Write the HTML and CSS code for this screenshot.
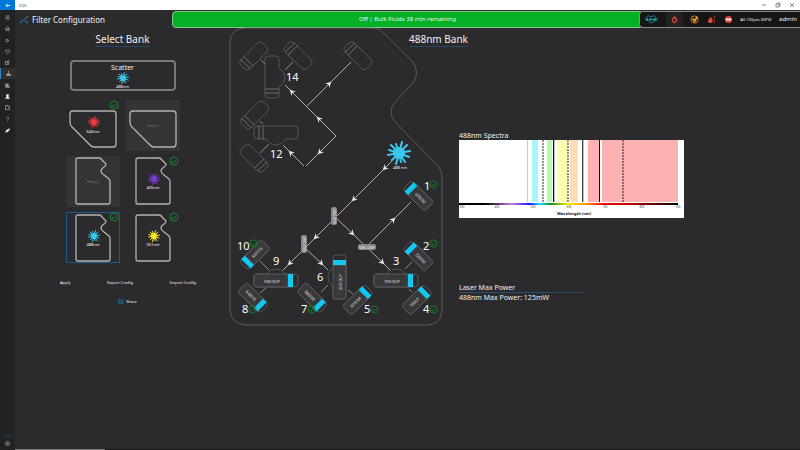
FILE: index.html
```html
<!DOCTYPE html>
<html lang="en">
  <head>
    <meta charset="UTF-8" />
    <meta name="viewport" content="width=device-width, initial-scale=1.0" />
    <title>SQS</title>
    <link rel="stylesheet" href="styles.css">
  </head>
  <body>
    <!-- shared shapes -->
    <svg class="defs" aria-hidden="true">
      <symbol id="burst" viewBox="-12 -12 24 24">
        <circle r="6" fill="currentColor" />
        <path d="M0 0L3-11M0 0L8-8M0 0L11-2M0 0L10 4M0 0L6 9M0 0L2 9M0 0L-3 11M0 0L-7 7M0 0L-11 2M0 0L-10-3M0 0L-8-8M0 0L-3-9" stroke="currentColor" stroke-width="2" stroke-linecap="round" />
      </symbol>
      <symbol id="check" viewBox="-5 -5 10 10">
        <circle r="4" fill="none" stroke="#12862a" />
        <path d="M-2 0L-1 2L2-1" fill="none" stroke="#12862a" />
      </symbol>
      <symbol id="chip" viewBox="-16 -7 32 14" overflow="visible">
        <rect class="shell" x="-15" y="-6" width="31" height="13" rx="4" />
        <path class="thin" d="M-11-6V7M-7-6V7" />
      </symbol>
      <symbol id="chip-on" viewBox="-16 -7 32 14" overflow="visible">
        <rect class="shell" x="-15" y="-6" width="31" height="13" rx="4" />
        <rect class="glass" x="-7" y="-6" width="23" height="13" rx="2" />
        <rect class="band" x="-12" y="-6" width="5" height="13" />
      </symbol>
      <symbol id="chip-on-end" viewBox="-16 -7 32 14" overflow="visible">
        <rect class="shell" x="-16" y="-6" width="31" height="13" rx="4" />
        <rect class="glass" x="-16" y="-6" width="23" height="13" rx="2" />
        <rect class="band" x="7" y="-6" width="5" height="13" />
      </symbol>
    </svg>

    <div class="titlebar">
      <button class="back" aria-label="Back">
        <svg viewBox="0 0 6 6"><path d="M6 3H1M3 1L1 3L3 5" /></svg>
      </button>
      <span class="app_name">SQS</span>
      <div class="win_buttons">
        <button aria-label="Minimize"><svg viewBox="0 0 6 6"><path d="M1 3H5" /></svg></button>
        <button aria-label="Restore"><svg viewBox="0 0 6 6"><path d="M1 2H4V5H1ZM2 2V1H5V4H4" /></svg></button>
        <button aria-label="Close"><svg viewBox="0 0 6 6"><path d="M1 1L5 5M5 1L1 5" /></svg></button>
      </div>
    </div>

    <div class="shell_row">
      <nav class="sidebar">
        <div class="nav_items">
          <button aria-label="Menu"><svg viewBox="0 0 10 10"><path d="M1 2H9M1 5H9M1 8H9" /></svg></button>
          <button aria-label="Home"><svg viewBox="0 0 10 10"><path d="M1 5L5 1L9 5M2 4V9H4V6H6V9H8V4" /></svg></button>
          <button aria-label="Run"><svg viewBox="0 0 10 10"><path d="M3 2L8 5L3 8Z" /></svg></button>
          <button aria-label="Health"><svg viewBox="0 0 10 10"><path d="M5 9L1 5C0 3 3 0 5 3C7 0 10 3 9 5Z" /></svg></button>
          <button aria-label="Edit"><svg viewBox="0 0 10 10"><path d="M5 3H1V9H7V6M4 6L5 3L8 1L9 3L6 6Z" /></svg></button>
          <button class="active" aria-label="Filters"><svg viewBox="0 0 10 10"><path d="M4 1H6M5 1V4L2 7H8L5 4M1 9H9V7H1Z" /></svg></button>
          <button aria-label="Library"><svg viewBox="0 0 10 10"><path d="M1 1V9M3 1V9H5V2H3M6 2L9 9M6 2V9H9" /></svg></button>
          <button aria-label="User"><svg viewBox="0 0 10 10"><path class="solid" d="M3 1H7V5L6 6L9 8V9H1V8L4 6L3 5Z" /></svg></button>
          <button aria-label="Files"><svg viewBox="0 0 10 10"><path d="M1 1H6L9 4V9H1ZM6 1V4H9" /></svg></button>
          <button aria-label="Help"><svg viewBox="0 0 10 10"><path d="M3 3C3 0 8 0 7 3C7 5 5 4 5 7M5 8V9" /></svg></button>
          <button aria-label="Clean"><svg viewBox="0 0 10 10"><path class="solid" d="M1 9L3 4L6 3L9 1L8 5L6 7Z" /></svg></button>
        </div>
        <a class="info" href="#info">Info</a>
        <button aria-label="Settings"><svg viewBox="0 0 10 10"><circle cx="5" cy="5" r="4" /><circle cx="5" cy="5" r="1" /></svg></button>
      </nav>

      <div class="page">
        <header class="header">
          <div class="heading">
            <svg viewBox="0 0 12 10">
              <path d="M2 8L8 3M5 5L9 9" stroke="#1c6ea4" />
              <path d="M7 4L10 1" stroke="#8a8a8a" />
              <circle cx="2" cy="8" r="1" fill="#1c7ab8" />
              <circle cx="9" cy="8" r="1" fill="#1c7ab8" />
            </svg>
            <h1>Filter Configuration</h1>
          </div>
          <div class="banner">Off | Bulk Fluids 38 min remaining</div>
          <div class="status">
            <button class="health" aria-label="Cytometer health"><svg viewBox="0 0 13 10"><path d="M6 9L2 6C-1 1 4 0 6 2C9 0 13 1 11 6Z" stroke="#1585b0" /><path d="M0 5H13" stroke="#2fb4a0" stroke-width="2" stroke-dasharray="3 1" /></svg></button>
            <button class="drop" aria-label="Fluid"><svg viewBox="0 0 10 10"><path d="M5 1C8 4 8 5 8 7C7 10 3 10 2 7C2 5 3 4 5 1Z" stroke="#d8403a" stroke-width="2" /></svg></button>
            <button aria-label="Calibration"><svg viewBox="0 0 10 10"><circle cx="5" cy="5" r="4" stroke="#e08a1c" /><path d="M3 4L5 7L8 2" stroke="#f0a030" stroke-width="2" /></svg></button>
            <button aria-label="Level"><svg viewBox="0 0 10 10"><path d="M4 2C6 5 7 6 6 8C5 9 2 9 1 8C1 6 2 5 4 2Z" fill="#e84840" /><path d="M8 1V9" stroke="#e84840" stroke-dasharray="2 1" /></svg></button>
            <button aria-label="Stop"><svg viewBox="0 0 10 10"><circle cx="5" cy="5" r="4" fill="#ec4038" /><path d="M2 5H8" stroke="#fff" stroke-width="2" /></svg></button>
            <span class="mode">A0-100µm-30PSI</span>
            <span class="user">admin</span>
          </div>
        </header>

        <main class="content">
          <section class="banks">
            <h2>Select Bank</h2>
            <button class="scatter">
              <span>Scatter</span>
              <svg class="c488"><use href="#burst" /></svg>
              <small>488nm</small>
            </button>
            <div class="tiles">
              <button class="tile">
                <svg viewBox="0 0 54 51">
                  <path class="card" d="M7 11H47Q50 11 50 14V44Q50 47 47 47H28Q26 47 24 45L6 27Q4 25 4 22V14Q4 11 7 11Z" />
                  <use class="c640" href="#burst" x="22" y="16" width="12" height="12" />
                  <text x="27" y="33">640nm</text>
                  <use href="#check" x="43" y="0" width="10" height="10" />
                </svg>
              </button>
              <button class="tile empty">
                <svg viewBox="0 0 54 51">
                  <path class="card" d="M7 11H47Q50 11 50 14V44Q50 47 47 47H28Q26 47 24 45L6 27Q4 25 4 22V14Q4 11 7 11Z" />
                  <text x="27" y="27">Empty</text>
                </svg>
              </button>
              <button class="tile empty">
                <svg viewBox="0 0 54 51">
                  <path class="card" d="M12 2H33Q35 2 36 4L40 8Q40 10 38 11Q35 13 35 15Q35 17 38 19L43 23Q44 24 44 26V46Q44 48 42 48H12Q10 48 10 46V4Q10 2 12 2Z" />
                  <text x="27" y="27">Empty</text>
                </svg>
              </button>
              <button class="tile">
                <svg viewBox="0 0 54 51">
                  <path class="card" d="M12 2H33Q35 2 36 4L40 8Q40 10 38 11Q35 13 35 15Q35 17 38 19L43 23Q44 24 44 26V46Q44 48 42 48H12Q10 48 10 46V4Q10 2 12 2Z" />
                  <use class="c405" href="#burst" x="22" y="17" width="12" height="12" />
                  <text x="27" y="33">405nm</text>
                  <use href="#check" x="43" y="0" width="10" height="10" />
                </svg>
              </button>
              <button class="tile selected">
                <svg viewBox="0 0 54 51">
                  <path class="card" d="M12 3H33Q35 3 36 5L40 9Q40 11 38 12Q35 14 35 16Q35 18 38 20L43 24Q44 25 44 27V47Q44 49 42 49H12Q10 49 10 47V5Q10 3 12 3Z" />
                  <use class="c488" href="#burst" x="22" y="18" width="12" height="12" />
                  <text x="27" y="34">488nm</text>
                  <use href="#check" x="43" y="0" width="10" height="10" />
                </svg>
              </button>
              <button class="tile">
                <svg viewBox="0 0 54 51">
                  <path class="card" d="M12 3H33Q35 3 36 5L40 9Q40 11 38 12Q35 14 35 16Q35 18 38 20L43 24Q44 25 44 27V47Q44 49 42 49H12Q10 49 10 47V5Q10 3 12 3Z" />
                  <use class="c561" href="#burst" x="22" y="18" width="12" height="12" />
                  <text x="27" y="34">561nm</text>
                  <use href="#check" x="43" y="0" width="10" height="10" />
                </svg>
              </button>
            </div>
            <div class="actions">
              <button>Apply</button>
              <button>Export Config</button>
              <button>Import Config</button>
            </div>
            <button class="share">
              <svg viewBox="0 0 6 6"><path d="M1 1V5H5V3M2 3L5 1" /></svg>
              Share
            </button>
          </section>

          <section class="bank_map">
            <h2>488nm Bank</h2>
            <svg class="map" viewBox="230 28 212 298">
              <defs>
                <marker id="arrow" viewBox="-4 -3 6 6" markerWidth="6" markerHeight="6" markerUnits="userSpaceOnUse" orient="auto">
                  <path d="M2 0L-4-3L-2 0L-4 3Z" fill="#e6e6e6" />
                </marker>
              </defs>
              <path class="outline" d="M244 28H374Q380 28 385 34L413 62Q420 73 413 83L395 102Q387 112 395 122L437 165Q442 170 442 178V310Q441 324 428 325H246Q231 324 230 310V42Q231 29 244 28Z" />

              <!-- light path, a marker sits on every middle point -->
              <g class="beam">
                <path d="M392 161L384 169L353 200L315 238L289 264L283 270" />
                <path d="M334 216L353 234L383 263L390 270" />
                <path d="M366 247L394 219L411 202" />
                <path d="M305 248L322 264L328 270" />
                <path d="M336 136L318 118L291 91L285 85" />
                <path d="M336 136L319 153L306 166" />
                <path d="M304 166L290 152L283 145" />
                <path d="M307 106L330 83L351 62" />
              </g>
              <g class="stub">
                <path d="M261 60L265 64M293 62L285 70M260 121L263 124M269 144L260 153" />
                <path d="M260 261L269 270M260 293L266 288M328 285L321 292M412 262L405 269M409 289L412 292M348 290L353 294" />
              </g>

              <!-- empty slots -->
              <g transform="translate(253 56) rotate(-45)"><use href="#chip" x="-16" y="-7" width="32" height="14" /></g>
              <g transform="translate(298 55) rotate(45)"><use href="#chip" x="-16" y="-7" width="32" height="14" /></g>
              <g transform="translate(358 55) rotate(45)"><use href="#chip" x="-16" y="-7" width="32" height="14" /></g>
              <g transform="translate(254 115) rotate(-45)"><use href="#chip" x="-16" y="-7" width="32" height="14" /></g>
              <g transform="translate(254 159) rotate(225)"><use href="#chip" x="-16" y="-7" width="32" height="14" /></g>
              <path class="shell" d="M268 56H276Q279 56 279 59V68Q285 72 285 78Q285 83 279 87V95Q279 98 276 98H268Q265 98 265 95V59Q265 56 268 56Z" />
              <path class="thin" d="M265 89H279M265 93H279" />
              <path class="shell" d="M257 126H295Q298 126 298 129V136Q298 139 295 139H286Q282 145 276 145Q270 145 267 139H257Q254 139 254 136V129Q254 126 257 126Z" />
              <path class="thin" d="M259 126V139M263 126V139" />

              <!-- filters -->
              <g transform="translate(254 255) rotate(-45)"><use href="#chip-on" x="-16" y="-7" width="32" height="14" /><text class="label" x="4" y="2">507/19</text></g>
              <g transform="translate(254 298) rotate(45)"><use href="#chip-on-end" x="-16" y="-7" width="32" height="14" /><text class="label" x="-4" y="2">549/15</text></g>
              <g transform="translate(313 298) rotate(45)"><use href="#chip-on-end" x="-16" y="-7" width="32" height="14" /><text class="label" x="-4" y="2">583/30</text></g>
              <g transform="translate(358 299) rotate(-45)"><use href="#chip-on-end" x="-16" y="-7" width="32" height="14" /><text class="label" x="-4" y="2">615/24</text></g>
              <g transform="translate(417 299) rotate(-45)"><use href="#chip-on-end" x="-16" y="-7" width="32" height="14" /><text class="label" x="-4" y="2">750LP</text></g>
              <g transform="translate(418 255) rotate(45)"><use href="#chip-on" x="-16" y="-7" width="32" height="14" /><text class="label" x="4" y="2">720/60</text></g>
              <g transform="translate(418 195) rotate(45)"><use href="#chip-on" x="-16" y="-7" width="32" height="14" /><text class="label" x="4" y="2">670/30</text></g>

              <!-- dichroics -->
              <g transform="translate(276 281)">
                <path class="shell" d="M-19-7H-10Q-6-12 0-12Q6-12 10-7H19Q22-7 22-4V3Q22 6 19 6H-19Q-22 6-22 3V-4Q-22-7-19-7Z" />
                <rect class="glass" x="-22" y="-7" width="34" height="13" rx="2" />
                <rect class="band" x="12" y="-7" width="5" height="13" />
                <text class="label" x="-4" y="2">530 DLP</text>
              </g>
              <g transform="translate(396 281)">
                <path class="shell" d="M-19-7H-10Q-6-12 0-12Q6-12 10-7H19Q22-7 22-4V3Q22 6 19 6H-19Q-22 6-22 3V-4Q-22-7-19-7Z" />
                <rect class="glass" x="-22" y="-7" width="34" height="13" rx="2" />
                <rect class="band" x="12" y="-7" width="5" height="13" />
                <text class="label" x="-4" y="2">750 DLP</text>
              </g>
              <g transform="translate(340 277) rotate(-90)">
                <path class="shell" d="M-19-7H-10Q-6-12 0-12Q6-12 10-7H19Q22-7 22-4V3Q22 6 19 6H-19Q-22 6-22 3V-4Q-22-7-19-7Z" />
                <rect class="glass" x="-22" y="-7" width="34" height="13" rx="2" />
                <rect class="band" x="12" y="-7" width="5" height="13" />
                <text class="label" x="-5" y="2">600 DLP</text>
              </g>
              <g class="pill" transform="translate(334 216) rotate(-90)"><rect x="-9" y="-3" width="18" height="6" rx="2" /><text y="2">640 DSP</text></g>
              <g class="pill" transform="translate(304 244) rotate(-90)"><rect x="-9" y="-3" width="18" height="6" rx="2" /><text y="2">560 DSP</text></g>
              <g class="pill" transform="translate(367 247)"><rect x="-9" y="-3" width="18" height="6" rx="2" /><text y="2">685 DSP</text></g>

              <use class="c488" href="#burst" x="387" y="141" width="24" height="24" />
              <text class="label" x="400" y="169">488 nm</text>

              <g class="num">
                <text x="286" y="81">14</text>
                <text x="270" y="158">12</text>
                <text x="237" y="250">10</text>
                <text x="273" y="265">9</text>
                <text x="317" y="281">6</text>
                <text x="242" y="313">8</text>
                <text x="301" y="313">7</text>
                <text x="364" y="313">5</text>
                <text x="423" y="313">4</text>
                <text x="393" y="265">3</text>
                <text x="423" y="250">2</text>
                <text x="424" y="190">1</text>
              </g>
              <g>
                <use href="#check" x="249" y="239" width="9" height="9" />
                <use href="#check" x="248" y="305" width="9" height="9" />
                <use href="#check" x="307" y="305" width="9" height="9" />
                <use href="#check" x="370" y="305" width="9" height="9" />
                <use href="#check" x="429" y="305" width="9" height="9" />
                <use href="#check" x="429" y="239" width="9" height="9" />
                <use href="#check" x="429" y="180" width="9" height="9" />
              </g>
            </svg>
          </section>

          <section class="details">
            <h3>488nm Spectra</h3>
            <svg class="chart" viewBox="0 0 225 78">
              <defs>
                <linearGradient id="visible">
                  <stop offset="0" stop-color="#000" />
                  <stop offset="0.12" stop-color="#000" />
                  <stop offset="0.24" stop-color="#c77de0" />
                  <stop offset="0.32" stop-color="#1a1aff" />
                  <stop offset="0.37" stop-color="#18e0f0" />
                  <stop offset="0.42" stop-color="#109020" />
                  <stop offset="0.5" stop-color="#fff000" />
                  <stop offset="0.58" stop-color="#ff9010" />
                  <stop offset="0.66" stop-color="#f00808" />
                  <stop offset="0.78" stop-color="#c00000" />
                  <stop offset="1" stop-color="#000" />
                </linearGradient>
              </defs>
              <rect width="225" height="78" fill="#fff" />
              <rect x="68" width="1" height="62" fill="#7fe6f2" />
              <rect x="73" width="6" height="62" fill="#aef2fc" />
              <rect x="88" width="5" height="62" fill="#b2fbb2" />
              <rect x="98" width="11" height="62" fill="#fdfdb0" />
              <rect x="111" width="8" height="62" fill="#fddcb8" />
              <rect x="129" width="11" height="62" fill="#fdb2b2" />
              <rect x="143" width="76" height="62" fill="#fdb2b2" />
              <rect x="94" width="1" height="62" fill="#111" />
              <rect x="95" width="1" height="62" fill="#b8c0b8" />
              <rect x="123" width="1" height="62" fill="#3c4644" />
              <rect x="124" width="1" height="62" fill="#b8c0b8" />
              <rect x="140" width="1" height="62" fill="#111" />
              <path class="dash" d="M84 0V62M109 0V62M164 0V62" />
              <rect y="63" width="219" height="2" fill="url(#visible)" />
              <g class="ticks">
                <text x="3" y="68">300</text>
                <text x="38" y="68">400</text>
                <text x="74" y="68">500</text>
                <text x="110" y="68">600</text>
                <text x="146" y="68">700</text>
                <text x="183" y="68">800</text>
                <text x="219" y="68">900</text>
              </g>
              <text class="axis" x="115" y="75">Wavelength (nm)</text>
            </svg>
            <h3 class="power_title">Laser Max Power</h3>
            <p class="power">488nm Max Power: 125mW</p>
          </section>
        </main>
        <div class="progress"><div class="progress_bar"></div></div>
      </div>
    </div>
  </body>
</html>
```
FILE: styles.css
```css
* {
  box-sizing: border-box;
}
body {
  margin: 0;
  min-height: 100vh;
  display: flex;
  flex-direction: column;
  background: #2b2b2d;
  color: #f0f0f0;
  font-family: "Noto Sans", "Open Sans", sans-serif;
  font-size: 4px;
}
button {
  border: none;
  background: none;
  color: inherit;
  font: inherit;
  padding: 0;
}
svg {
  display: block;
}
h1,
h2,
h3,
p {
  margin: 0;
  font-weight: 400;
}
.defs {
  position: absolute;
  width: 0;
  height: 0;
}

/* laser colours */
.c488 {
  color: #3cc8ec;
}
.c640 {
  color: #f03c3c;
}
.c405 {
  color: #7a3cd0;
}
.c561 {
  color: #f4ec20;
}

/* window title bar */
.titlebar {
  display: flex;
  align-items: center;
  height: 10px;
  background: #fff;
  color: #555;
}
.back {
  display: flex;
  align-items: center;
  justify-content: center;
  width: 15px;
  height: 10px;
  background: #0078d7;
}
.back svg {
  width: 5px;
  height: 5px;
  fill: none;
  stroke: #fff;
}
.app_name {
  margin-left: 4px;
}
.win_buttons {
  display: flex;
  gap: 8px;
  margin-left: auto;
  padding-right: 5px;
}
.win_buttons svg {
  width: 6px;
  height: 6px;
  fill: none;
  stroke: #8a8a8a;
}

/* left navigation */
.shell_row {
  flex: 1;
  display: flex;
}
.sidebar {
  flex: none;
  display: flex;
  flex-direction: column;
  width: 15px;
  padding: 2px 0 1px;
  background: #222224;
}
.nav_items {
  display: flex;
  flex-direction: column;
  justify-content: space-between;
  height: 124px;
}
.sidebar button {
  display: flex;
  align-items: center;
  justify-content: center;
  height: 11px;
}
.sidebar svg {
  width: 5px;
  height: 5px;
  fill: none;
  stroke: #d8d8d8;
}
.sidebar .solid {
  fill: #fff;
}
.sidebar .active {
  background: #303032;
  border-left: 1px solid #2a8cc8;
}
.sidebar .info {
  margin-top: auto;
  color: #1a5a86;
  text-align: center;
  text-decoration: none;
}

/* header */
.page {
  flex: 1;
  display: flex;
  flex-direction: column;
}
.header {
  display: flex;
  align-items: center;
  height: 18px;
}
.heading {
  display: flex;
  align-items: center;
  gap: 2px;
  width: 20%;
  padding-left: 4px;
}
.heading svg {
  width: 11px;
  height: 9px;
  fill: none;
}
.heading h1 {
  font-size: 8px;
  white-space: nowrap;
}
.banner {
  flex: 1;
  height: 17px;
  margin-right: -4px;
  border: 1px solid #7fc98a;
  border-radius: 4px;
  background: #06b025;
  font-size: 6px;
  line-height: 15px;
  text-align: center;
}
.status {
  display: flex;
  align-items: center;
  justify-content: space-between;
  z-index: 1;
  width: 161px;
  height: 17px;
  padding: 0 3px 0 5px;
  border: 1px solid #8a8a8a;
  border-right: none;
  border-radius: 4px 0 0 4px;
  background: #161617;
}
.status svg {
  width: 9px;
  height: 9px;
  fill: none;
}
.status .health svg {
  width: 13px;
}
.status .drop {
  padding: 3px 5px;
  background: #222224;
}
.status .drop svg {
  width: 7px;
}
.user {
  font-size: 6px;
}

/* content */
.content {
  flex: 1;
  display: grid;
  grid-template-columns: 215fr 212fr 358fr;
  align-items: start;
}
h2 {
  width: max-content;
  border-bottom: 1px solid #244a66;
  font-size: 10px;
  line-height: 14px;
}
.banks {
  display: flex;
  flex-direction: column;
  align-items: center;
  padding-top: 4px;
}
.scatter {
  display: flex;
  flex-direction: column;
  align-items: center;
  width: 106px;
  height: 31px;
  margin-top: 13px;
  padding-top: 1px;
  border: 2px solid #79797a;
  border-radius: 4px;
  font-size: 7px;
  line-height: 9px;
}
.scatter svg {
  width: 12px;
  height: 12px;
}
.scatter small {
  font-size: 4px;
  line-height: 5px;
}
.tiles {
  display: grid;
  grid-template-columns: 54px 54px;
  gap: 5px 6px;
  margin-top: 9px;
}
.tile {
  height: 51px;
}
.tile.empty {
  background: #343436;
}
.tile.selected {
  outline: 1px solid #1a5c8c;
  outline-offset: -1px;
}
.tile text {
  fill: #f0f0f0;
  font-size: 4px;
  text-anchor: middle;
}
.tile.empty text {
  fill: #737374;
}
.card {
  fill: none;
  stroke: #b4b4b4;
  stroke-width: 1.3;
}
.actions {
  display: flex;
  justify-content: space-between;
  width: 136px;
  margin: 17px 0 0 11px;
}
.share {
  display: flex;
  align-items: center;
  gap: 2px;
  margin: 13px 0 0 10px;
}
.share svg {
  width: 6px;
  height: 6px;
  fill: none;
  stroke: #1c7ab8;
}

/* filter map */
.bank_map {
  position: relative;
}
.bank_map h2 {
  position: absolute;
  top: 4px;
  left: 179px;
}
.map {
  width: 100%;
  overflow: visible;
  fill: none;
}
.outline {
  stroke: #6e6e70;
  stroke-width: 0.7;
}
.beam path {
  stroke: #b0b0b0;
  marker-mid: url(#arrow);
}
.stub path {
  stroke: #8e8e90;
}
.shell {
  fill: #2b2b2d;
  stroke: #68686a;
  stroke-width: 0.7;
}
.thin {
  stroke: #8a8a8c;
  stroke-width: 0.7;
}
.glass {
  fill: #39393b;
  stroke: #68686a;
  stroke-width: 0.7;
}
.band {
  fill: #10c8f0;
}
.label {
  fill: #f0f0f0;
  font-size: 4px;
  text-anchor: middle;
}
.pill rect {
  fill: #868688;
}
.pill text {
  fill: #f0f0f0;
  font-size: 4px;
  text-anchor: middle;
}
.num {
  fill: #fff;
  font-size: 11px;
}

/* spectra */
.details {
  padding: 103px 116px 0 17px;
}
h3 {
  font-size: 7px;
  line-height: 9px;
}
.chart {
  width: 100%;
}
.dash {
  stroke: #222;
  stroke-width: 1;
  stroke-dasharray: 2 1;
}
.ticks {
  fill: #555;
  font-size: 3px;
  text-anchor: middle;
}
.axis {
  fill: #111;
  font-size: 4px;
  font-weight: 700;
  text-anchor: middle;
}
.power_title {
  width: 125px;
  margin-top: 65px;
  border-bottom: 1px solid #24506e;
}
.power {
  font-size: 7px;
  line-height: 10px;
}

/* bottom line */
.progress {
  height: 1px;
  background: #18181a;
}
.progress_bar {
  width: 90px;
  height: 1px;
  background: #7c7c7c;
}
```
